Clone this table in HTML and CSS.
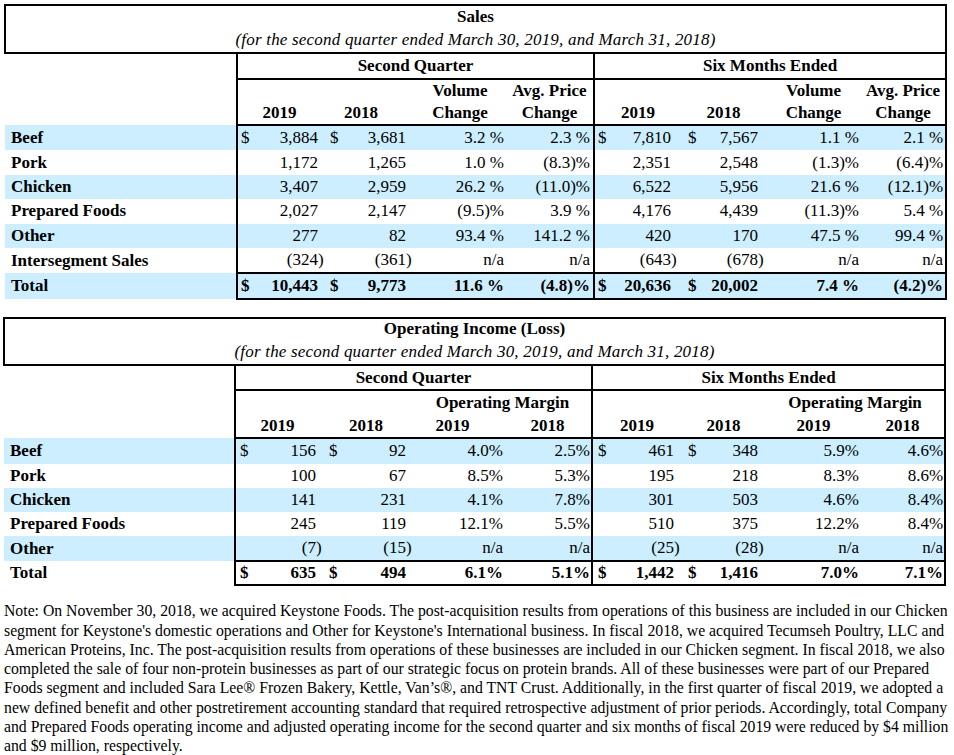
FILE: index.html
```html
<!DOCTYPE html>
<html>
<head>
<meta charset="utf-8">
<link rel="stylesheet" href="styles.css">
</head>
<body>
<div class="page">
<table class="fin t1">
<colgroup><col class="w0"><col class="w1"><col class="w2"><col class="w3"><col class="w4"><col class="w5"><col class="w6"><col class="w7"><col class="w8"></colgroup>
<tr class="title-row"><td colspan="9" class="title"><div class="ttl">Sales</div><div class="sub">(for the second quarter ended March 30, 2019, and March 31, 2018)</div></td></tr>
<tr class="hd1"><td></td><th colspan="4" class="grp bl">Second Quarter</th><th colspan="4" class="grp bl br">Six Months Ended</th></tr>
<tr class="hd2"><td></td><th class="bl"></th><th></th><th>Volume</th><th>Avg. Price</th><th class="bl"></th><th></th><th>Volume</th><th class="br">Avg. Price</th></tr>
<tr class="hd3"><td></td><th class="bl h1">2019</th><th class="h2">2018</th><th>Change</th><th>Change</th><th class="bl">2019</th><th>2018</th><th>Change</th><th class="br">Change</th></tr>
<tr class="row blue"><td class="lbl">Beef</td><td class="n bl"><span class="cur">$</span>3,884</td><td class="n"><span class="cur">$</span>3,681</td><td class="n">3.2&nbsp;%</td><td class="n">2.3&nbsp;%</td><td class="n bl"><span class="cur">$</span>7,810</td><td class="n"><span class="cur">$</span>7,567</td><td class="n">1.1&nbsp;%</td><td class="n br">2.1&nbsp;%</td></tr>
<tr class="row"><td class="lbl">Pork</td><td class="n bl">1,172</td><td class="n">1,265</td><td class="n">1.0&nbsp;%</td><td class="n">(8.3)%</td><td class="n bl">2,351</td><td class="n">2,548</td><td class="n">(1.3)%</td><td class="n br">(6.4)%</td></tr>
<tr class="row blue"><td class="lbl">Chicken</td><td class="n bl">3,407</td><td class="n">2,959</td><td class="n">26.2&nbsp;%</td><td class="n">(11.0)%</td><td class="n bl">6,522</td><td class="n">5,956</td><td class="n">21.6&nbsp;%</td><td class="n br">(12.1)%</td></tr>
<tr class="row"><td class="lbl">Prepared Foods</td><td class="n bl">2,027</td><td class="n">2,147</td><td class="n">(9.5)%</td><td class="n">3.9&nbsp;%</td><td class="n bl">4,176</td><td class="n">4,439</td><td class="n">(11.3)%</td><td class="n br">5.4&nbsp;%</td></tr>
<tr class="row blue"><td class="lbl">Other</td><td class="n bl">277</td><td class="n">82</td><td class="n">93.4&nbsp;%</td><td class="n">141.2&nbsp;%</td><td class="n bl">420</td><td class="n">170</td><td class="n">47.5&nbsp;%</td><td class="n br">99.4&nbsp;%</td></tr>
<tr class="row"><td class="lbl">Intersegment Sales</td><td class="n bl">(324<span class="rp">)</span></td><td class="n">(361<span class="rp">)</span></td><td class="n">n/a</td><td class="n">n/a</td><td class="n bl">(643<span class="rp">)</span></td><td class="n">(678<span class="rp">)</span></td><td class="n">n/a</td><td class="n br">n/a</td></tr>
<tr class="row blue total"><td class="lbl">Total</td><td class="n bl"><span class="cur">$</span>10,443</td><td class="n"><span class="cur">$</span>9,773</td><td class="n">11.6&nbsp;%</td><td class="n">(4.8)%</td><td class="n bl"><span class="cur">$</span>20,636</td><td class="n"><span class="cur">$</span>20,002</td><td class="n">7.4&nbsp;%</td><td class="n br">(4.2)%</td></tr>
</table>

<table class="fin t2">
<colgroup><col class="v0"><col class="v1"><col class="v2"><col class="v3"><col class="v4"><col class="v5"><col class="v6"><col class="v7"><col class="v8"></colgroup>
<tr class="title-row"><td colspan="9" class="title"><div class="ttl">Operating Income (Loss)</div><div class="sub">(for the second quarter ended March 30, 2019, and March 31, 2018)</div></td></tr>
<tr class="hd1"><td></td><th colspan="4" class="grp bl">Second Quarter</th><th colspan="4" class="grp bl br">Six Months Ended</th></tr>
<tr class="hd2"><td></td><th class="bl"></th><th></th><th colspan="2">Operating Margin</th><th class="bl"></th><th></th><th colspan="2" class="br">Operating Margin</th></tr>
<tr class="hd3"><td></td><th class="bl h1">2019</th><th class="h2">2018</th><th class="h3">2019</th><th>2018</th><th class="bl">2019</th><th>2018</th><th>2019</th><th class="br">2018</th></tr>
<tr class="row blue"><td class="lbl">Beef</td><td class="n bl"><span class="cur">$</span>156</td><td class="n"><span class="cur">$</span>92</td><td class="n">4.0%</td><td class="n">2.5%</td><td class="n bl"><span class="cur">$</span>461</td><td class="n"><span class="cur">$</span>348</td><td class="n">5.9%</td><td class="n br">4.6%</td></tr>
<tr class="row"><td class="lbl">Pork</td><td class="n bl">100</td><td class="n">67</td><td class="n">8.5%</td><td class="n">5.3%</td><td class="n bl">195</td><td class="n">218</td><td class="n">8.3%</td><td class="n br">8.6%</td></tr>
<tr class="row blue"><td class="lbl">Chicken</td><td class="n bl">141</td><td class="n">231</td><td class="n">4.1%</td><td class="n">7.8%</td><td class="n bl">301</td><td class="n">503</td><td class="n">4.6%</td><td class="n br">8.4%</td></tr>
<tr class="row"><td class="lbl">Prepared Foods</td><td class="n bl">245</td><td class="n">119</td><td class="n">12.1%</td><td class="n">5.5%</td><td class="n bl">510</td><td class="n">375</td><td class="n">12.2%</td><td class="n br">8.4%</td></tr>
<tr class="row blue"><td class="lbl">Other</td><td class="n bl">(7<span class="rp">)</span></td><td class="n">(15<span class="rp">)</span></td><td class="n">n/a</td><td class="n">n/a</td><td class="n bl">(25<span class="rp">)</span></td><td class="n">(28<span class="rp">)</span></td><td class="n">n/a</td><td class="n br">n/a</td></tr>
<tr class="row total"><td class="lbl">Total</td><td class="n bl"><span class="cur">$</span>635</td><td class="n"><span class="cur">$</span>494</td><td class="n">6.1%</td><td class="n">5.1%</td><td class="n bl"><span class="cur">$</span>1,442</td><td class="n"><span class="cur">$</span>1,416</td><td class="n">7.0%</td><td class="n br">7.1%</td></tr>
</table>

<p class="note">
<span class="ln">Note: On November 30, 2018, we acquired Keystone Foods. The post-acquisition results from operations of this business are included in our Chicken</span>
<span class="ln">segment for Keystone's domestic operations and Other for Keystone's International business. In fiscal 2018, we acquired Tecumseh Poultry, LLC and</span>
<span class="ln">American Proteins, Inc. The post-acquisition results from operations of these businesses are included in our Chicken segment. In fiscal 2018, we also</span>
<span class="ln">completed the sale of four non-protein businesses as part of our strategic focus on protein brands. All of these businesses were part of our Prepared</span>
<span class="ln">Foods segment and included Sara Lee® Frozen Bakery, Kettle, Van’s®, and TNT Crust. Additionally, in the first quarter of fiscal 2019, we adopted a</span>
<span class="ln">new defined benefit and other postretirement accounting standard that required retrospective adjustment of prior periods. Accordingly, total Company</span>
<span class="ln">and Prepared Foods operating income and adjusted operating income for the second quarter and six months of fiscal 2019 were reduced by $4 million</span>
<span class="ln">and $9 million, respectively.</span>
</p>
</div>
</body>
</html>
```
FILE: styles.css
```css
html, body { margin: 0; padding: 0; background: #fff; }
body { font-family: "Liberation Serif", "Times New Roman", serif; color: #000; }
.page { padding: 4px 0 0 0; }

.fin { border-collapse: collapse; table-layout: fixed; width: 941px; font-size: 17px; }
.t1 { margin-left: 4px; }
.t2 { margin-left: 3px; margin-top: 17px; }

.t1 .w0 { width: 232px; } .t1 .w1 { width: 89px; } .t1 .w2 { width: 88px; } .t1 .w3 { width: 92px; }
.t1 .w4 { width: 88px; } .t1 .w5 { width: 87px; } .t1 .w6 { width: 85px; } .t1 .w7 { width: 95px; } .t1 .w8 { width: 85px; }
.t2 .v0 { width: 231px; } .t2 .v1 { width: 89px; } .t2 .v2 { width: 90px; } .t2 .v3 { width: 90px; }
.t2 .v4 { width: 88px; } .t2 .v5 { width: 89px; } .t2 .v6 { width: 85px; } .t2 .v7 { width: 95px; } .t2 .v8 { width: 84px; }

.fin td, .fin th { padding: 0; white-space: nowrap; }
.title { border: 2px solid #000; text-align: center; padding: 0; }
.ttl { font-weight: bold; line-height: 22px; }
.sub { font-style: italic; line-height: 24px; letter-spacing: 0.2px; }
.t2 .ttl { line-height: 20px; }
.t2 .sub { line-height: 25px; }

.fin th { font-weight: bold; text-align: center; height: 22px; line-height: 20px; vertical-align: middle; }
.hd1 th { height: 24px; }
.t2 .hd1 th { height: 23px; }
.t2 .hd2 th, .t2 .hd3 th { height: 23px; }
.grp { border-bottom: 2px solid #000; }
.hd3 th { border-bottom: 2px solid #000; }
.bl { border-left: 2px solid #000; }
.br { border-right: 2px solid #000; }
.t1 .h1 { padding-right: 5px; }
.t1 .h2 { padding-right: 18px; }
.t2 .h1 { padding-right: 5px; }
.t2 .h2 { padding-right: 6px; }
.t2 .h3 { padding-right: 13px; }

.row td { height: 24.4px; line-height: 20px; vertical-align: middle; }
.t2 .row td { height: 24.2px; }
.row.blue td { background: #cceeff; }
.lbl { font-weight: bold; padding-left: 6px !important; text-align: left; }
.n { text-align: right; }
.cur { float: left; }
.rp { margin-right: -0.33em; }
.fin .total td { font-weight: bold; border-top: 2px solid #000; border-bottom: 2px solid #000; height: 24px; }
.t2 .total td { height: 22px; }
.fin .total td.lbl { border-top: none; border-bottom: none; }

.t1 .row td:nth-child(2) { padding-left: 3px; padding-right: 8px; }
.t1 .row td:nth-child(3) { padding-left: 4px; padding-right: 8px; }
.t1 .row td:nth-child(4) { padding-right: 2px; }
.t1 .row td:nth-child(5) { padding-right: 3px; }
.t1 .row td:nth-child(6) { padding-left: 3px; padding-right: 10px; }
.t1 .row td:nth-child(7) { padding-left: 7px; padding-right: 8px; }
.t1 .row td:nth-child(8) { padding-right: 2px; }
.t1 .row td:nth-child(9) { padding-right: 2px; }

.t2 .row td:nth-child(2) { padding-left: 4px; padding-right: 8px; }
.t2 .row td:nth-child(3) { padding-left: 5px; padding-right: 8px; }
.t2 .row td:nth-child(4) { padding-right: 1px; }
.t2 .row td:nth-child(5) { padding-right: 1px; }
.t2 .row td:nth-child(6) { padding-left: 5px; padding-right: 7px; }
.t2 .row td:nth-child(7) { padding-left: 7px; padding-right: 8px; }
.t2 .row td:nth-child(8) { padding-right: 2px; }
.t2 .row td:nth-child(9) { padding-right: 1px; }

.note { margin: 15px 0 0 4px; font-size: 15.75px; line-height: 19.3px; }
.ln { display: block; width: max-content; white-space: nowrap; }
```
